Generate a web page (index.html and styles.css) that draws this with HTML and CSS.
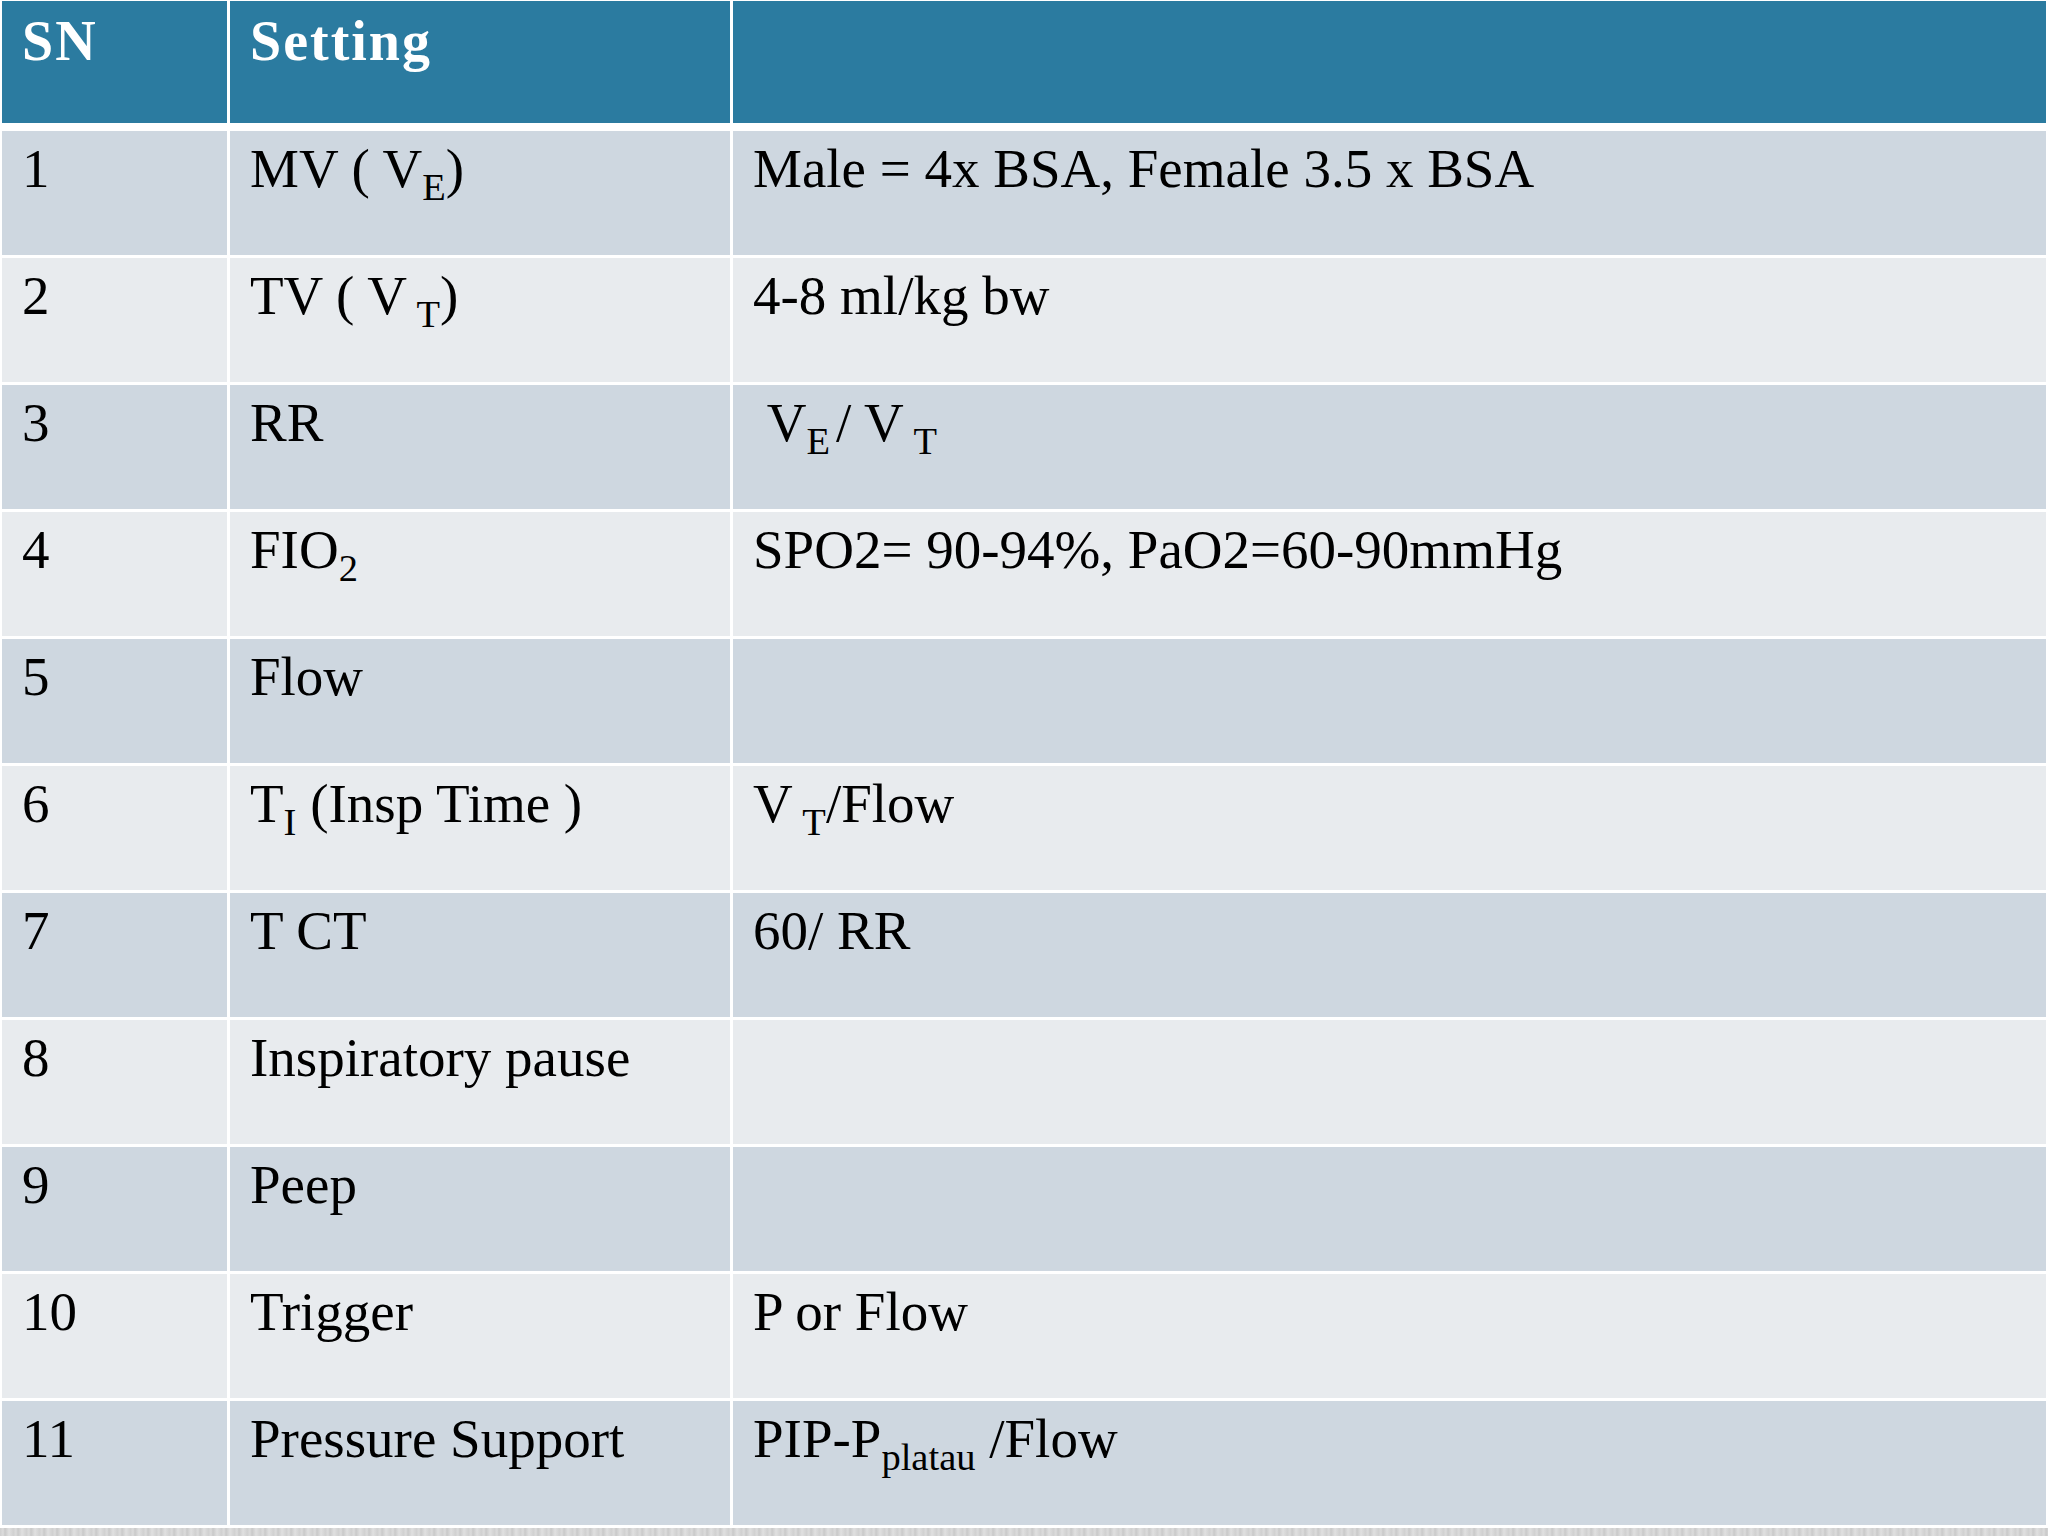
FILE: index.html
```html
<!DOCTYPE html>
<html lang="en">
<head>
<meta charset="utf-8">
<title>Ventilator settings</title>
<link rel="stylesheet" href="styles.css">
</head>
<body>
<div class="slide">
  <div class="table">
    <div class="row head">
      <div class="cell">SN</div>
      <div class="cell">Setting</div>
      <div class="cell"></div>
    </div>
    <div class="row odd">
      <div class="cell">1</div>
      <div class="cell">MV ( V<sub>E</sub>)</div>
      <div class="cell">Male = 4x BSA, Female 3.5 x BSA</div>
    </div>
    <div class="row even">
      <div class="cell">2</div>
      <div class="cell">TV ( V<sub>&nbsp;T</sub>)</div>
      <div class="cell">4-8 ml/kg bw</div>
    </div>
    <div class="row odd">
      <div class="cell">3</div>
      <div class="cell">RR</div>
      <div class="cell">&nbsp;V<sub class="gap">E</sub>/ V<sub>&nbsp;T</sub></div>
    </div>
    <div class="row even">
      <div class="cell">4</div>
      <div class="cell">FIO<sub>2</sub></div>
      <div class="cell">SPO2= 90-94%, PaO2=60-90mmHg</div>
    </div>
    <div class="row odd">
      <div class="cell">5</div>
      <div class="cell">Flow</div>
      <div class="cell"></div>
    </div>
    <div class="row even">
      <div class="cell">6</div>
      <div class="cell">T<sub>I</sub> (Insp Time )</div>
      <div class="cell">V<sub>&nbsp;T</sub>/Flow</div>
    </div>
    <div class="row odd">
      <div class="cell">7</div>
      <div class="cell">T CT</div>
      <div class="cell">60/ RR</div>
    </div>
    <div class="row even">
      <div class="cell">8</div>
      <div class="cell">Inspiratory pause</div>
      <div class="cell"></div>
    </div>
    <div class="row odd">
      <div class="cell">9</div>
      <div class="cell">Peep</div>
      <div class="cell"></div>
    </div>
    <div class="row even">
      <div class="cell">10</div>
      <div class="cell">Trigger</div>
      <div class="cell">P or Flow</div>
    </div>
    <div class="row odd">
      <div class="cell">11</div>
      <div class="cell">Pressure Support</div>
      <div class="cell">PIP-P<sub>platau</sub> /Flow</div>
    </div>
  </div>
  <div class="strip"></div>
</div>
</body>
</html>
```

FILE: styles.css
```css
html, body {
  margin: 0;
  padding: 0;
  background: #ffffff;
}

.slide {
  width: 2048px;
  height: 1536px;
  overflow: hidden;
  display: flex;
  flex-direction: column;
  background: #ffffff;
}

.table {
  display: flex;
  flex-direction: column;
  gap: 3px;
  padding: 1px 2px 0 2px;
  font-family: "Liberation Serif", "Times New Roman", serif;
  color: #000000;
}

.row {
  display: grid;
  grid-template-columns: 225px 500px 1fr;
  column-gap: 3px;
  height: 124px;
}

.row.head {
  height: 122px;
  margin-bottom: 5px;
}

.cell {
  padding: 6px 0 0 20px;
  font-size: 55px;
  line-height: 63px;
  white-space: nowrap;
}

.head .cell {
  background: #2b7ba0;
  color: #ffffff;
  font-weight: bold;
  font-size: 56px;
  letter-spacing: 2px;
  padding-top: 9px;
}

.odd .cell {
  background: #ced7e0;
}

.even .cell {
  background: #e8ebee;
}

sub {
  font-size: 0.7em;
  vertical-align: -13px;
  line-height: 0;
}

sub.gap {
  margin-right: 6px;
}

.strip {
  margin-top: 3px;
  flex: 1;
  background-color: #d6d6d6;
  background-image: repeating-linear-gradient(90deg, #cfcfcf 0px, #dcdcdc 3px, #c9c9c9 5px, #e0e0e0 9px, #d2d2d2 13px);
}
```
